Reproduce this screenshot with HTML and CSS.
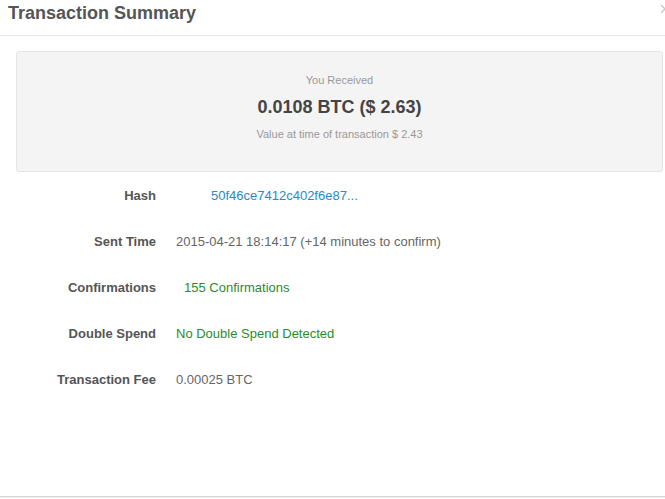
FILE: index.html
```html
<!DOCTYPE html>
<html>
<head>
<meta charset="utf-8">
<link rel="stylesheet" href="styles.css">
</head>
<body>
<div class="page">
  <div class="header">
    <h1 class="title">Transaction Summary</h1>
    <svg class="close" width="4" height="10" viewBox="0 0 4 10" aria-label="close"><path d="M0 1 L8 9 M8 1 L0 9" stroke="#c8c8c8" stroke-width="1.5" fill="none"/></svg>
  </div>
  <div class="summary">
    <div class="received">You Received</div>
    <div class="amount">0.0108 BTC ($ 2.63)</div>
    <div class="value-time">Value at time of transaction $ 2.43</div>
  </div>
  <div class="details">
    <div class="label">Hash</div>
    <div class="value"><a class="hash" href="#">50f46ce7412c402f6e87...</a></div>
    <div class="label">Sent Time</div>
    <div class="value">2015-04-21 18:14:17 (+14 minutes to confirm)</div>
    <div class="label">Confirmations</div>
    <div class="value"><span class="ok conf">155 Confirmations</span></div>
    <div class="label">Double Spend</div>
    <div class="value"><span class="ok">No Double Spend Detected</span></div>
    <div class="label">Transaction Fee</div>
    <div class="value">0.00025 BTC</div>
  </div>
  <div class="footer"></div>
</div>
</body>
</html>
```
FILE: styles.css
```css
html, body {
  margin: 0;
  padding: 0;
  background: #fff;
  overflow: hidden;
}
body {
  font-family: "Liberation Sans", Arial, sans-serif;
  color: #555;
}
.page {
  display: flex;
  flex-direction: column;
  height: 499px;
}
.header {
  display: flex;
  justify-content: space-between;
  align-items: flex-start;
  height: 35px;
  border-bottom: 1px solid #e8e8e8;
  overflow: hidden;
}
.title {
  margin: 0;
  padding: 3px 0 0 8px;
  font-size: 18px;
  line-height: 20px;
  font-weight: bold;
  color: #555;
}
.close {
  display: block;
  margin-top: 4px;
  margin-right: 0;
}
.summary {
  margin: 15px 2px 0 16px;
  height: 119px;
  box-sizing: content-box;
  border: 1px solid #e4e4e4;
  border-radius: 3px;
  background: #f4f4f4;
  display: flex;
  flex-direction: column;
  align-items: center;
}
.received {
  margin-top: 21px;
  font-size: 11px;
  line-height: 14px;
  color: #999;
}
.amount {
  margin-top: 9px;
  font-size: 18px;
  line-height: 22px;
  font-weight: bold;
  color: #444;
}
.value-time {
  margin-top: 9px;
  font-size: 11px;
  line-height: 14px;
  color: #999;
}
.details {
  display: grid;
  grid-template-columns: 156px 1fr;
  grid-auto-rows: 46px;
  column-gap: 20px;
  align-items: center;
  font-size: 13px;
}
.label {
  text-align: right;
  font-weight: bold;
  color: #555;
}
.value {
  color: #666;
}
.hash {
  color: #2a88cc;
  text-decoration: none;
  padding-left: 35px;
}
.ok {
  color: #2e8a2e;
}
.conf {
  padding-left: 8px;
}
.footer {
  margin-top: auto;
  margin-bottom: 1px;
  height: 1px;
  border-top: 1px solid #d6d6d6;
  background: #efefef;
}
```
